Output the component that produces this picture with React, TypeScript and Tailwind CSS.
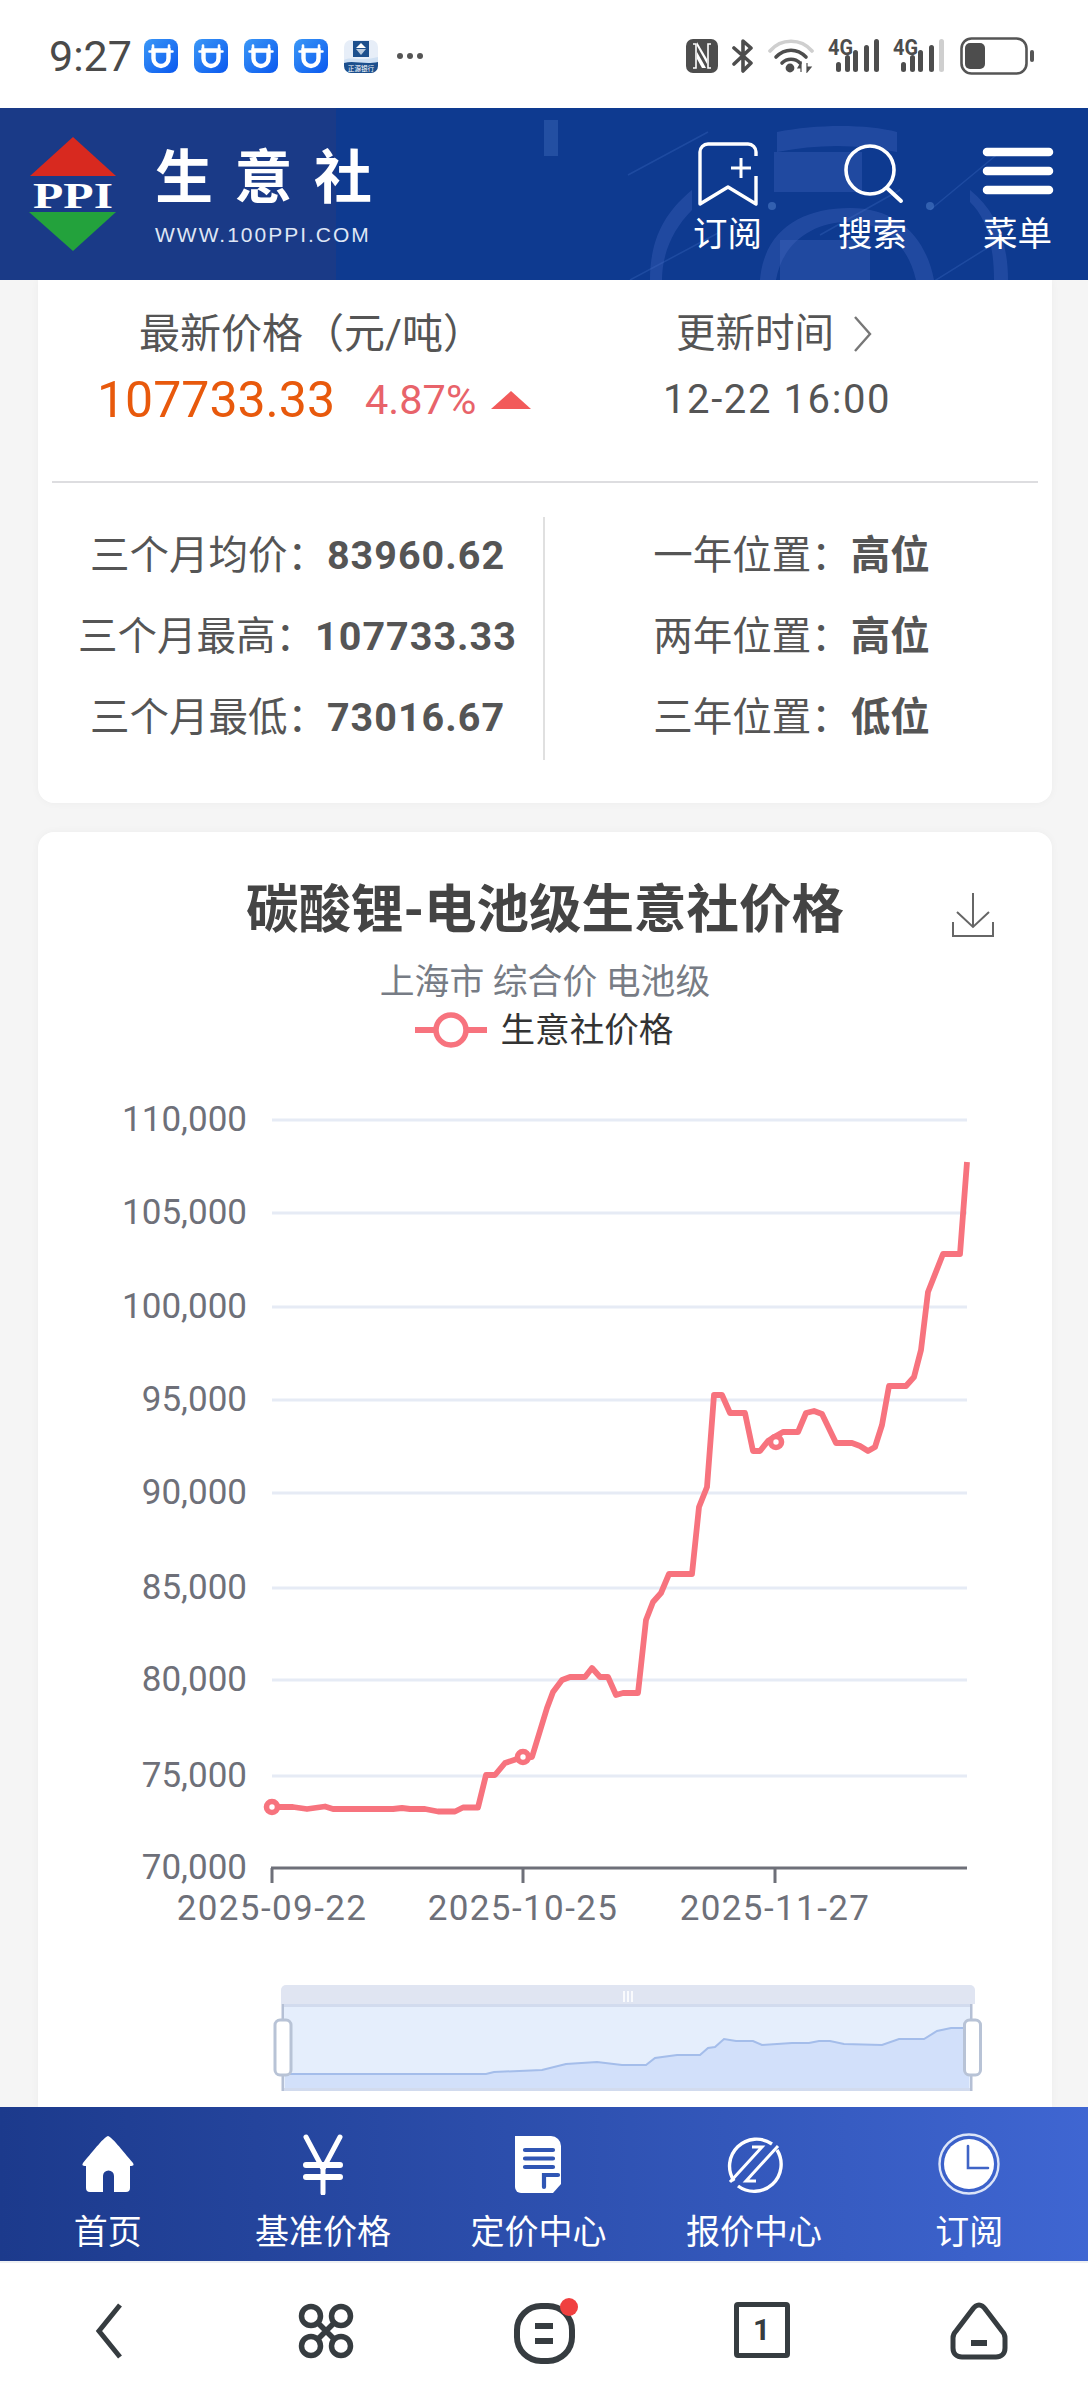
import React from 'react';

const linePoints = '272,1807 293,1807 307,1809 325,1806.5 333,1809 393,1809 402,1808 410,1809 425,1809 438,1811.5 455,1811.5 463,1807.5 478,1807.5 486,1775 495,1775 505,1763 523,1757 532,1757 547,1708 553,1692 562,1680 570,1677 585,1677 592,1668 600,1677 608,1677 616,1695 623,1693 638,1693 646,1620 653,1602 661,1593 669,1574 692,1574 699,1507 707,1487 714,1395 722,1395 730,1413 745,1413 753,1451 760,1451 768,1441 776,1436 783,1432 798,1432 806,1413 814,1411 822,1414 836,1443 852,1443 860,1446 868,1451 875,1447 882,1425 889,1386 906,1386 914,1377 921,1350 928,1292 943,1254 960,1254 967,1162';
const zoomPoints = '285,2074 486,2074 494,2072 542,2070 566,2064 597,2062 622,2065 646,2065 655,2058 677,2055 700,2055 708,2048 715,2047 724,2039 736,2041 753,2041 762,2045 792,2043 809,2043 819,2041 830,2041 844,2044 882,2045 899,2039 924,2039 937,2031 951,2028 969,2028';

const yTicks = [
  { label: '110,000', y: 1120 },
  { label: '105,000', y: 1213 },
  { label: '100,000', y: 1307 },
  { label: '95,000', y: 1400 },
  { label: '90,000', y: 1493 },
  { label: '85,000', y: 1588 },
  { label: '80,000', y: 1680 },
  { label: '75,000', y: 1776 },
  { label: '70,000', y: 1868 },
];
const xTicks = [
  { label: '2025-09-22', x: 272 },
  { label: '2025-10-25', x: 523 },
  { label: '2025-11-27', x: 775 },
];

function CowIcon() {
  return (
    <svg width="34" height="34" viewBox="0 0 34 34">
      <defs>
        <linearGradient id="cowBg" x1="0" y1="0" x2="1" y2="1">
          <stop offset="0" stopColor="#3a97f6" />
          <stop offset="1" stopColor="#0a58ef" />
        </linearGradient>
      </defs>
      <rect width="34" height="34" rx="8" fill="url(#cowBg)" />
      <path d="M9.5 11.5h15v8a7.5 7.5 0 0 1-15 0z" fill="none" stroke="#fff" strokeWidth="4.4" />
      <path d="M9 6.5v4M25 6.5v4M5.5 12.5h4M24.5 12.5h4" fill="none" stroke="#fff" strokeWidth="2.6" strokeLinecap="round" />
    </svg>
  );
}

function BankIcon() {
  return (
    <svg width="34" height="34" viewBox="0 0 34 34">
      <rect y="1" width="34" height="33" rx="7" fill="#e7eef8" />
      <path d="M0 21c8-4 14 2 34-3v9H0z" fill="#cfe0f3" />
      <path d="M0 24c10-3 20 2 34-1v4a7 7 0 0 1-7 7H7a7 7 0 0 1-7-7z" fill="#1c4f8d" />
      <rect x="9" y="2" width="16" height="16" fill="#1c4f8d" />
      <path d="M17 4l5 5H12z" fill="#fff" />
      <path d="M12 10h10l-5 6z" fill="#b8c9dd" />
      <text x="17" y="31.5" fontSize="6.6" fill="#fff" textAnchor="middle">正源银行</text>
    </svg>
  );
}

function SignalIcon({ lastLight }: { lastLight?: boolean }) {
  const bars = [
    { x: 8, y: 23 },
    { x: 17, y: 16 },
    { x: 25, y: 11 },
    { x: 36, y: 6 },
    { x: 46, y: 0 },
  ];
  return (
    <svg className="-mt-[8px]" width="52" height="42" viewBox="0 -8 52 42">
      <text x="0" y="16" fontSize="22" fontWeight="700" fill="#4d4d4d" textLength="25" lengthAdjust="spacingAndGlyphs">4G</text>
      {bars.map((b, i) => (
        <rect
          key={b.x}
          x={b.x}
          y={b.y}
          width="5"
          height={33 - b.y}
          rx="2.5"
          fill={lastLight && i === 4 ? '#cfcfcf' : '#4d4d4d'}
        />
      ))}
    </svg>
  );
}

function StatusBar() {
  return (
    <div className="h-[108px] shrink-0 bg-white flex items-center justify-between pl-[49px] pr-[54px] pt-[4px]">
      <div className="flex items-center">
        <span className="text-[43px] leading-none text-[#4a4a4a] w-[95px]">9:27</span>
        <div className="flex gap-[16px]">
          <CowIcon />
          <CowIcon />
          <CowIcon />
          <CowIcon />
          <BankIcon />
        </div>
        <div className="flex gap-[4px] ml-[19px]">
          <span className="w-[6px] h-[6px] rounded-full bg-[#555]" />
          <span className="w-[6px] h-[6px] rounded-full bg-[#555]" />
          <span className="w-[6px] h-[6px] rounded-full bg-[#555]" />
        </div>
      </div>
      <div className="flex items-center">
        <svg width="32" height="34" viewBox="0 0 32 34">
          <rect width="32" height="34" rx="7" fill="#4d4d4d" />
          <path d="M7 5h3v24H7M25 29h-3V5h3" fill="none" stroke="#fff" strokeWidth="1.6" />
          <path d="M11 7l10 18v-5L11 3z" fill="#fff" />
          <path d="M11 13l9 16h-4l-5-9z" fill="#fff" />
        </svg>
        <svg className="ml-[14px]" width="22" height="36" viewBox="0 0 22 36">
          <path d="M2 10l17 15-8 8V3l8 7L2 26" fill="none" stroke="#4d4d4d" strokeWidth="3.6" strokeLinejoin="round" strokeLinecap="round" />
        </svg>
        <svg className="ml-[14px]" width="46" height="34" viewBox="0 0 46 34">
          <path d="M2 12C13 -1 33 -1 44 12" fill="none" stroke="#cfcfcf" strokeWidth="3.6" strokeLinecap="round" />
          <path d="M8 18c9-9 21-9 30 0" fill="none" stroke="#4d4d4d" strokeWidth="3.6" strokeLinecap="round" />
          <path d="M14 24c5-5 13-5 18 0" fill="none" stroke="#4d4d4d" strokeWidth="3.6" strokeLinecap="round" />
          <circle cx="22" cy="29" r="4.4" fill="#4d4d4d" />
          <path d="M33 33v-9l-3 5h3M39 24v9l4-5h-4" fill="#4d4d4d" stroke="#4d4d4d" strokeWidth="1.2" />
        </svg>
        <div className="ml-[14px] h-[34px]"><SignalIcon /></div>
        <div className="ml-[13px] h-[34px]"><SignalIcon lastLight /></div>
        <svg className="ml-[15px]" width="74" height="38" viewBox="0 0 74 38">
          <rect x="1.5" y="1.5" width="65" height="35" rx="10" fill="none" stroke="#555" strokeWidth="2.6" />
          <rect x="5" y="6" width="20" height="26" rx="5" fill="#4d4d4d" />
          <rect x="70" y="13" width="4" height="12" rx="2" fill="#555" />
        </svg>
      </div>
    </div>
  );
}

function LogoMark() {
  return (
    <svg width="88" height="114" viewBox="0 0 88 114">
      <path d="M44 0L87 39H1z" fill="#d8291f" />
      <rect x="3" y="45" width="82" height="26" fill="#1a3a87" />
      <text x="44" y="71" fontFamily="'Liberation Serif', serif" fontWeight="700" fontSize="35" fill="#fff" textAnchor="middle" textLength="80" lengthAdjust="spacingAndGlyphs">PPI</text>
      <path d="M0 75h87L44 114z" fill="#23a23c" />
    </svg>
  );
}

function HeaderDecor() {
  return (
    <svg className="absolute left-0 top-0 pointer-events-none" width="1088" height="172" viewBox="0 108 1088 172">
      <rect x="336" y="108" width="752" height="172" fill="#0e3a90" />
      <g fill="none" stroke="#3b6bc0" strokeOpacity="0.35" strokeWidth="1.5">
        <path d="M630 280L720 232M628 175L708 132M820 235L900 190M920 290L1000 240M930 210L1000 152" />
      </g>
      <g fill="#4b6ec7" fillOpacity="0.3">
        <path d="M777 132c40-8 90-8 120 0v20c-40-8-80-8-120 0z" />
        <path d="M774 152h88v40h-88z" />
        <path d="M650 280c0-45 18-70 42-90v20c-20 20-30 45-30 70z" />
        <path d="M970 190c25 20 38 50 38 90h-14c0-40-10-65-24-78z" />
        <path d="M760 280c4-50 42-72 90-72s76 30 84 72h-18c-8-35-32-58-68-58s-66 22-72 58z" />
        <rect x="780" y="240" width="90" height="40" />
      </g>
      <circle cx="772" cy="206" r="4" fill="#4b79c7" fillOpacity="0.6" />
      <circle cx="930" cy="206" r="4" fill="#4b79c7" fillOpacity="0.6" />
      <rect x="544" y="120" width="14" height="36" fill="#4b79c7" fillOpacity="0.35" />
    </svg>
  );
}

function Header() {
  const items = [
    {
      label: '订阅',
      icon: (
        <svg width="64" height="66" viewBox="0 0 64 66">
          <path d="M60 16v-4a8 8 0 0 0-8-8H12a8 8 0 0 0-8 8v52l28-17 28 17V36" fill="none" stroke="#fff" strokeWidth="3.4" strokeLinejoin="round" />
          <path d="M45 18v20M35 28h20" fill="none" stroke="#fff" strokeWidth="3" />
        </svg>
      ),
    },
    {
      label: '搜索',
      icon: (
        <svg width="64" height="66" viewBox="0 0 64 66">
          <circle cx="29" cy="30" r="24" fill="none" stroke="#fff" strokeWidth="3.6" />
          <path d="M46 48l14 13" fill="none" stroke="#fff" strokeWidth="4" strokeLinecap="round" />
        </svg>
      ),
    },
    {
      label: '菜单',
      icon: (
        <svg width="72" height="66" viewBox="0 0 72 66">
          <path d="M5 12h62M5 31h62M5 50h62" fill="none" stroke="#fff" strokeWidth="8.5" strokeLinecap="round" />
        </svg>
      ),
    },
  ];
  return (
    <div className="relative h-[172px] shrink-0 bg-[#1a3a87] flex justify-between overflow-hidden">
      <HeaderDecor />
      <div className="relative flex pl-[29px] pt-[29px]">
        <LogoMark />
        <div className="ml-[38px] flex flex-col">
          <span className="text-[58px] leading-[72px] font-bold text-white tracking-[21.5px] whitespace-nowrap mt-[5px]">生意社</span>
          <span className="mt-[9px] text-[21px] leading-[24px] text-[#dfe6f5] tracking-[2px] font-['Liberation_Sans',sans-serif]">WWW.100PPI.COM</span>
        </div>
      </div>
      <div className="relative flex -mr-[2px]">
        {items.map((item) => (
          <div key={item.label} className="w-[145px] flex flex-col items-center pt-[32px]">
            <div className="h-[66px]">{item.icon}</div>
            <span className="mt-[10px] text-[34.5px] leading-[36px] text-white">{item.label}</span>
          </div>
        ))}
      </div>
    </div>
  );
}

function StatRow({ label, value, wide }: { label: string; value: string; wide?: boolean }) {
  return (
    <div className="h-[81px] flex items-center justify-center text-[#555] text-[39.5px] whitespace-nowrap">
      <span>{label}：</span>
      <span className={`font-bold ${wide ? '' : 'tracking-[1px]'}`}>{value}</span>
    </div>
  );
}

function PriceCard() {
  return (
    <div className="h-[523px] shrink-0 bg-white rounded-b-[16px] shadow-[0_0_8px_rgba(0,0,0,0.04)] px-[14px]">
      <div className="h-[201px] flex pt-[30px]">
        <div className="w-[512px] flex flex-col">
          <span className="ml-[87px] text-[41px] leading-[48px] text-[#555] whitespace-nowrap">最新价格（元/吨）</span>
          <div className="ml-[45px] mt-[12px] h-[60px] flex items-center">
            <span className="text-[50px] text-[#e8590c] leading-none">107733.33</span>
            <span className="ml-[30px] text-[41.5px] text-[#e8636a] leading-none">4.87%</span>
            <svg className="ml-[15px]" width="40" height="18" viewBox="0 0 40 18">
              <path d="M20 0L40 18H0z" fill="#f25a5a" />
            </svg>
          </div>
        </div>
        <div className="flex-1 flex flex-col">
          <div className="ml-[112px] flex items-center h-[48px]">
            <span className="text-[39.5px] text-[#555] leading-[48px] whitespace-nowrap">更新时间</span>
            <svg className="ml-[19px]" width="20" height="36" viewBox="0 0 20 36">
              <path d="M2 1l15 17L2 35" fill="none" stroke="#777" strokeWidth="2.4" />
            </svg>
          </div>
          <span className="ml-[99px] mt-[12px] text-[40px] tracking-[1.6px] leading-[60px] text-[#555] whitespace-nowrap">12-22 16:00</span>
        </div>
      </div>
      <div className="h-[2px] bg-[#dddde0]" />
      <div className="mt-[34px] h-[243px] flex">
        <div className="w-[493px] border-r-2 border-[#e0e0e0]">
          <div className="-mt-[2px]">
            <StatRow label="三个月均价" value="83960.62" />
            <StatRow label="三个月最高" value="107733.33" />
            <StatRow label="三个月最低" value="73016.67" />
          </div>
        </div>
        <div className="flex-1">
          <div className="-mt-[2px]">
            <StatRow label="一年位置" value="高位" wide />
            <StatRow label="两年位置" value="高位" wide />
            <StatRow label="三年位置" value="低位" wide />
          </div>
        </div>
      </div>
    </div>
  );
}

function ChartCard() {
  return (
    <div className="mt-[29px] flex-1 bg-white rounded-t-[16px] shadow-[0_0_8px_rgba(0,0,0,0.04)] overflow-hidden">
      <div className="relative pt-[48px] flex justify-center">
        <span className="text-[52.5px] leading-[60px] font-bold text-[#444] whitespace-nowrap">碳酸锂-电池级生意社价格</span>
        <svg className="absolute left-[914px] top-[60px]" width="42" height="46" viewBox="0 0 42 46">
          <path d="M21 1v34M5 20l16 15 16-15M1 30v14h40V30" fill="none" stroke="#666" strokeWidth="2" />
        </svg>
      </div>
      <div className="mt-[22px] text-center text-[34.8px] leading-[40px] text-[#777c85]">上海市 综合价 电池级</div>
      <div className="mt-[8px] h-[40px] flex items-center justify-center pr-[3px]">
        <svg width="74" height="40" viewBox="0 0 74 40">
          <path d="M1 20h72" stroke="#f7737e" strokeWidth="6" />
          <circle cx="37" cy="20" r="15" fill="#fff" stroke="#f7737e" strokeWidth="5.5" />
        </svg>
        <span className="ml-[13px] text-[34.6px] leading-[40px] text-[#333]">生意社价格</span>
      </div>
      <svg className="mt-[40px]" width="1014" height="1017" viewBox="38 1090 1014 1017">
        {yTicks.slice(0, 8).map((t) => (
          <rect key={t.y} x="272" y={t.y - 1.5} width="695" height="3" fill="#e6ebf5" />
        ))}
        {yTicks.map((t) => (
          <text key={t.label} x="247" y={t.y + 11} textAnchor="end" fontSize="35" fill="#6e7079">{t.label}</text>
        ))}
        <rect x="271" y="1866.5" width="696" height="3" fill="#6e7079" />
        {xTicks.map((t) => (
          <g key={t.label}>
            <rect x={t.x - 1.5} y="1868" width="3" height="15" fill="#6e7079" />
            <text x={t.x} y="1920" textAnchor="middle" fontSize="35" letterSpacing="1.4" fill="#6e7079">{t.label}</text>
          </g>
        ))}
        <polyline points={linePoints} fill="none" stroke="#f7737e" strokeWidth="5.8" strokeLinejoin="round" />
        {[[272, 1807], [523, 1757], [776, 1442]].map(([cx, cy]) => (
          <circle key={cx} cx={cx} cy={cy} r="5.5" fill="#fff" stroke="#f7737e" strokeWidth="5.6" />
        ))}
        {/* data zoom slider */}
        <path d="M281 2004v-14a5 5 0 0 1 5-5h684a5 5 0 0 1 5 5v14z" fill="#e0e5f2" />
        <path d="M624 1991v11M628 1991v11M632 1991v11" stroke="#fff" strokeWidth="1.6" />
        <rect x="282" y="2004" width="690" height="87" fill="#e5eefc" />
        <polygon points={`${zoomPoints} 969,2091 285,2091`} fill="#d2e0fa" />
        <polyline points={zoomPoints} fill="none" stroke="#a4bdea" strokeWidth="2" />
        <rect x="282" y="2004" width="690" height="3" fill="#d2dbee" />
        <rect x="282" y="2088" width="690" height="3" fill="#d2dbee" />
        <rect x="281.5" y="2004" width="2.5" height="87" fill="#b5c0d5" />
        <rect x="970" y="2004" width="2.5" height="87" fill="#b5c0d5" />
        <rect x="275" y="2020" width="16" height="55" rx="5" fill="#fff" stroke="#b8c3d6" strokeWidth="3" />
        <rect x="964.5" y="2020" width="16" height="55" rx="5" fill="#fff" stroke="#b8c3d6" strokeWidth="3" />
      </svg>
    </div>
  );
}

function BottomNav() {
  const items = [
    {
      label: '首页',
      icon: (
        <svg width="64" height="62" viewBox="0 0 64 62">
          <path d="M32 3c3 0 14 14 25 27 1 2 1 3-3 3v22a4 4 0 0 1-4 4H38V43a4 4 0 0 0-11 0v16H14a4 4 0 0 1-4-4V33c-4 0-4-1-3-3C18 17 29 3 32 3z" fill="#fff" />
        </svg>
      ),
    },
    {
      label: '基准价格',
      icon: (
        <svg width="64" height="62" viewBox="0 0 64 62">
          <path d="M15 4l17 32L49 4M32 36v24" fill="none" stroke="#fff" strokeWidth="5" strokeLinecap="round" />
          <path d="M15 32h34M15 44h34" fill="none" stroke="#fff" strokeWidth="6" strokeLinecap="round" />
        </svg>
      ),
    },
    {
      label: '定价中心',
      icon: (
        <svg width="64" height="62" viewBox="0 0 64 62">
          <path d="M9 3h36a10 10 0 0 1 10 10v38l-8 9H15a6 6 0 0 1-6-6z" fill="#fff" />
          <path d="M19 17h28M19 25.5h28M19 34h28" stroke="#3056b4" strokeWidth="4.2" strokeLinecap="round" />
          <path d="M38 54V42h14" fill="none" stroke="#3056b4" strokeWidth="4.2" strokeLinecap="round" />
        </svg>
      ),
    },
    {
      label: '报价中心',
      icon: (
        <svg width="64" height="62" viewBox="0 0 64 62">
          <path d="M12 48A27 27 0 0 1 50 11" fill="none" stroke="#fff" strokeWidth="3.4" />
          <path d="M16 53A27 27 0 0 0 55 17" fill="none" stroke="#fff" strokeWidth="3.4" />
          <path d="M8 49L40 14H30M56 13L24 48H34" fill="none" stroke="#fff" strokeWidth="3" />
        </svg>
      ),
    },
    {
      label: '订阅',
      icon: (
        <svg width="64" height="62" viewBox="0 0 64 62">
          <circle cx="32" cy="31" r="29.5" fill="none" stroke="#dbe4f8" strokeWidth="2.4" />
          <circle cx="32" cy="31" r="25" fill="#fff" />
          <path d="M31 13v22h20" fill="none" stroke="#3f64c6" strokeWidth="2.6" strokeLinecap="round" />
        </svg>
      ),
    },
  ];
  return (
    <div className="h-[154px] shrink-0 bg-gradient-to-r from-[#1c3a8c] to-[#3f66d2] grid grid-cols-5 pr-[11px]">
      {items.map((item) => (
        <div key={item.label} className="flex flex-col items-center pt-[26px]">
          <div className="h-[62px]">{item.icon}</div>
          <span className="mt-[19px] text-[34px] leading-[36px] text-white whitespace-nowrap">{item.label}</span>
        </div>
      ))}
    </div>
  );
}

function BrowserBar() {
  return (
    <div className="h-[139px] shrink-0 bg-white border-t-2 border-[#eef0f3] grid grid-cols-5 text-[#363c40]">
      <div className="flex justify-center pt-[40px]">
        <svg width="32" height="56" viewBox="0 0 32 56">
          <path d="M27 2L6 28l21 26" fill="none" stroke="#363c40" strokeWidth="5" />
        </svg>
      </div>
      <div className="flex justify-center pt-[40px]">
        <svg width="56" height="56" viewBox="0 0 56 56">
          <path d="M19 19L37 37M37 19L19 37" stroke="#363c40" strokeWidth="5.5" />
          <circle cx="13" cy="13" r="9.5" fill="none" stroke="#363c40" strokeWidth="5.5" />
          <circle cx="43" cy="13" r="9.5" fill="none" stroke="#363c40" strokeWidth="5.5" />
          <circle cx="13" cy="43" r="9.5" fill="none" stroke="#363c40" strokeWidth="5.5" />
          <circle cx="43" cy="43" r="9.5" fill="none" stroke="#363c40" strokeWidth="5.5" />
        </svg>
      </div>
      <div className="flex justify-center pt-[35px] pl-[8px]">
        <svg width="70" height="68" viewBox="0 0 70 68">
          <rect x="4" y="8" width="55" height="55" rx="24" fill="none" stroke="#363c40" strokeWidth="6" />
          <path d="M22 28h18M22 43h18" stroke="#363c40" strokeWidth="6" />
          <circle cx="56" cy="9" r="9" fill="#f04040" />
        </svg>
      </div>
      <div className="flex justify-center pt-[39px]">
        <div className="w-[56px] h-[56px] border-[5px] border-[#363c40] rounded-[4px] flex items-center justify-center">
          <span className="text-[30px] leading-none font-bold">1</span>
        </div>
      </div>
      <div className="flex justify-center pt-[39px]">
        <svg width="58" height="58" viewBox="0 0 58 58">
          <path d="M29 3c3 0 5 2 7 5l16 21c2 2 3 4 3 7v10c0 6-4 9-9 9H12c-5 0-9-3-9-9V36c0-3 1-5 3-7L22 8c2-3 4-5 7-5z" fill="none" stroke="#363c40" strokeWidth="5" />
          <path d="M21 41h16" stroke="#363c40" strokeWidth="6" />
        </svg>
      </div>
    </div>
  );
}

export default function App() {
  return (
    <div className="w-[1088px] h-[2400px] flex flex-col overflow-hidden bg-[#f5f5f5] font-[Roboto,'Noto_Sans_CJK_SC',sans-serif]">
      <StatusBar />
      <Header />
      <div className="flex-1 min-h-0 flex flex-col pl-[38px] pr-[36px] overflow-hidden">
        <PriceCard />
        <ChartCard />
      </div>
      <BottomNav />
      <BrowserBar />
    </div>
  );
}
